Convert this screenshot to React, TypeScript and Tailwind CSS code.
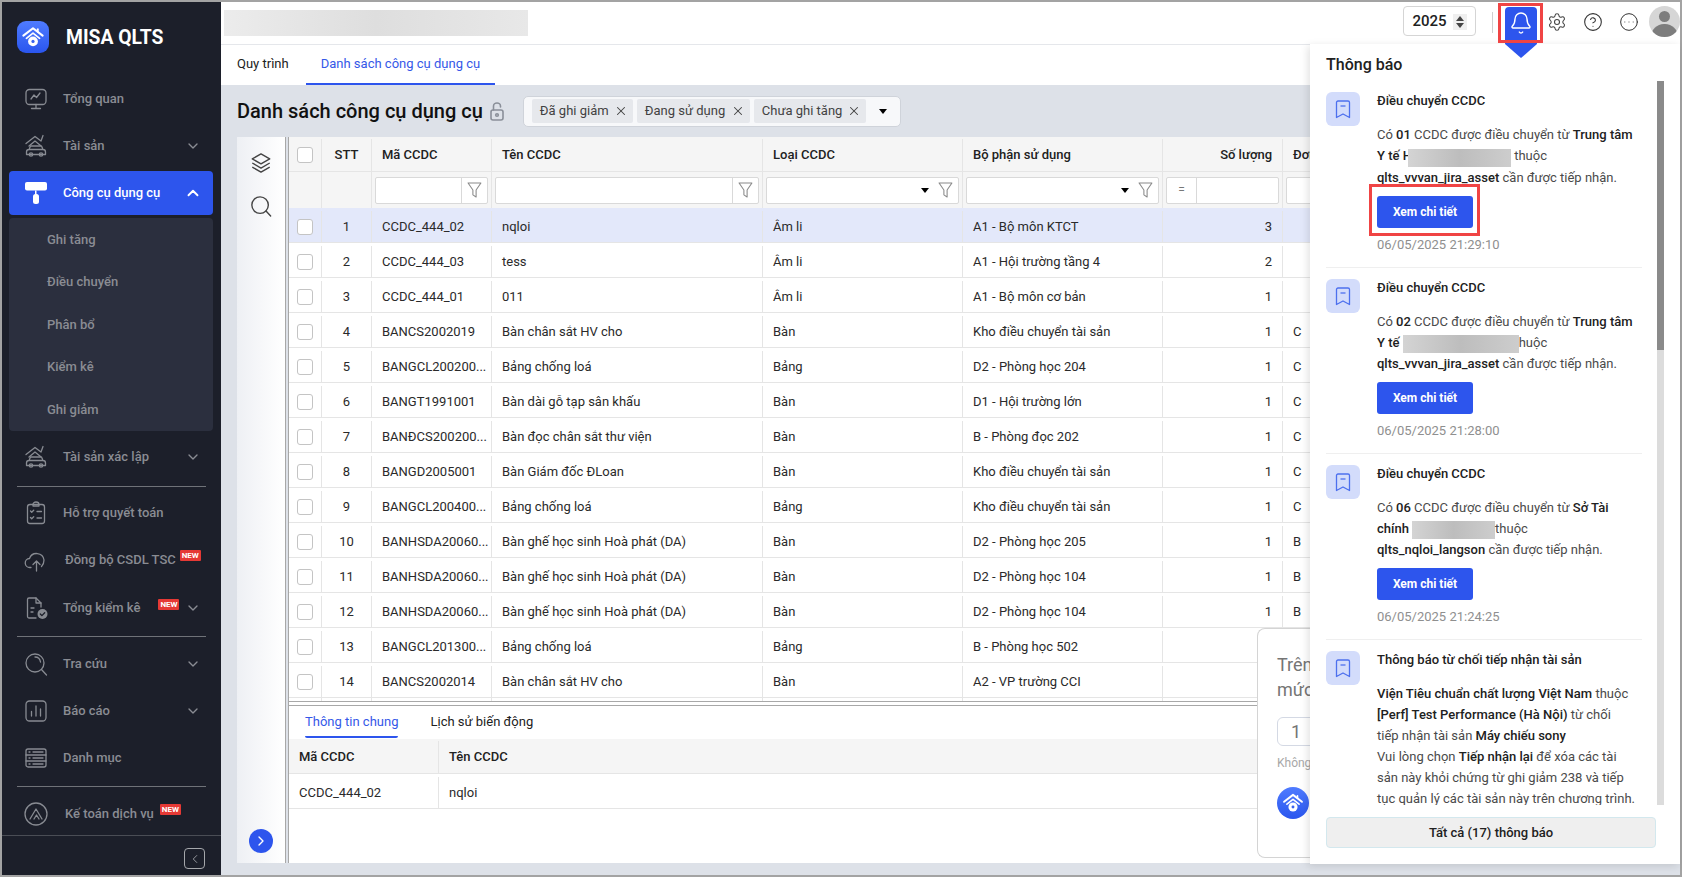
import { Bell, ChevronDown, ChevronLeft, ChevronRight, ChevronUp, CircleEllipsis, CircleHelp, Settings, X } from "lucide-react";
import type { ReactNode } from "react";

const BLUE = "bg-[#2d55ed]";

function LogoMark({ size }: { size: number }) {
  return (
    <svg width={size} height={size} viewBox="0 0 32 32" fill="none">
      <path d="M5 14.5 16 6l11 8.5" stroke="#fff" strokeWidth="2.4" strokeLinecap="round" strokeLinejoin="round" />
      <path d="M8.5 17.5 16 11.5l7.500 6" stroke="#fff" strokeWidth="2" strokeLinecap="round" strokeLinejoin="round" />
      <path d="M21.500 7V10" stroke="#fff" strokeWidth="2" strokeLinecap="round" />
      <circle cx="16" cy="21" r="5.600" fill="#fff" />
      <circle cx="16" cy="21" r="1.800" fill="#3a63ef" />
    </svg>
  );
}

function IconBase({ children }: { children: ReactNode }) {
  return (
    <svg width={24} height={24} viewBox="0 0 24 24" fill="none" stroke="#888b92" strokeWidth="1.300" strokeLinecap="round" strokeLinejoin="round">
      {children}
    </svg>
  );
}

const MonitorIcon = () => (
  <IconBase>
    <rect x="2" y="2.500" width="20" height="15" rx="3.500" />
    <path d="M7 12l3-4 2.500 2.500L16 6M12 17.500V21M7.500 21.500h9" />
  </IconBase>
);

const HouseCarIcon = () => (
  <IconBase>
    <path d="M2 9.500 11 2.500l6 4.500M17 7l2-5.500M5 12l6-5 5.500 4.500" />
    <path d="M5 15.500l1.500-3.500h11l1.500 3.500M2.500 18c0-1.500 1-2.500 2.500-2.500h14c1.500 0 2.500 1 2.500 2.500v2.500h-19z" />
    <circle cx="7" cy="20.500" r="1.700" />
    <circle cx="17" cy="20.500" r="1.700" />
  </IconBase>
);

const RollerIcon = () => (
  <svg width="24" height="24" viewBox="0 0 24 24" fill="#fff">
    <rect x="1" y="1" width="22" height="8.500" rx="2" />
    <path d="M11 9.500h1.500v4H11z" />
    <rect x="9" y="13" width="6" height="10" rx="2.500" />
  </svg>
);

const ClipboardIcon = () => (
  <IconBase>
    <rect x="3.500" y="3.500" width="17" height="19" rx="2.500" />
    <path d="M9 3.500c0-1.500 1.300-2.500 3-2.500s3 1 3 2.500V5H9zM6.500 10l1.200 1.200 2-2M13 10.500h4.500M6.500 16.500l1.200 1.200 2-2M13 17h4.500" />
  </IconBase>
);

const CloudUpIcon = () => (
  <IconBase>
    <path d="M7 19.500H6a4.500 4.500 0 0 1-.5-9 7.500 7.500 0 0 1 14.500 1.500c0 3-1 5-2.500 6.500" />
    <path d="M12.500 23v-10M9 16.500l3.500-3.500 3.500 3.500" />
  </IconBase>
);

const FileCheckIcon = () => (
  <IconBase>
    <path d="M17 11V7l-5-5H5a1.500 1.500 0 0 0-1.500 1.500v17A1.500 1.500 0 0 0 5 22h7" />
    <path d="M12 2v5h5M7 12h3M7 16h2" />
    <circle cx="18.500" cy="18" r="5" fill="#888b92" stroke="none" />
    <path d="M16.300 18l1.600 1.600 2.800-2.800" stroke="#1c1f2a" />
  </IconBase>
);

const SearchIcon = () => (
  <IconBase>
    <circle cx="11" cy="11" r="9" />
    <path d="M17.500 17.500l5 5.500M11 5c2.500 0 5 1.500 5.500 5" />
  </IconBase>
);

const ChartIcon = () => (
  <IconBase>
    <rect x="2" y="2" width="20" height="20" rx="3.500" />
    <path d="M7.500 12.500V17M12 7v10M16.500 10v7" />
  </IconBase>
);

const ListIcon = () => (
  <IconBase>
    <rect x="2" y="3" width="20" height="18" rx="2" />
    <path d="M2 9h20M2 15h20M5 6h1M9 6h10M5 12h1M9 12h10M5 18h1M9 18h10" />
  </IconBase>
);

const AccountIcon = () => (
  <IconBase>
    <circle cx="12" cy="12" r="11" />
    <path d="M6 17 12 7l6 10M10 17l2.500-4 2.500 4" />
  </IconBase>
);

function Funnel() {
  return (
    <svg width="15" height="18" viewBox="0 0 14 16" fill="none" stroke="#8a8a8a" strokeWidth="1" strokeLinejoin="round">
      <path d="M1 1.500h12L8.500 8v6.500l-3-2V8z" />
    </svg>
  );
}

function Caret() {
  return <span className="block h-0 w-0 border-x-[4px] border-t-[5px] border-x-transparent border-t-black" />;
}

function NewBadge({ className }: { className: string }) {
  return <span className={`flex h-[11px] w-[21px] shrink-0 items-center justify-center rounded-[1px] bg-[#e53935] text-[8px] font-bold leading-none text-white ${className}`}>NEW</span>;
}

function NavItem({ icon, label, chevron, textClass = "ml-[15px]", badge, shift = "" }: { icon: ReactNode; label: string; chevron?: boolean; textClass?: string; badge?: ReactNode; shift?: string }) {
  return (
    <div className={`flex h-[47px] shrink-0 items-center pl-[22px] pr-[22px] text-[13px] font-medium text-[#8a8c93] ${shift}`}>
      <span className="flex w-[24px] shrink-0 justify-center">{icon}</span>
      <span className={`whitespace-nowrap ${textClass}`}>{label}</span>
      {badge}
      {chevron && <ChevronDown size={16} strokeWidth={2} className="ml-auto -mr-[2px] shrink-0" />}
    </div>
  );
}

function Divider() {
  return <div className="mx-[15px] my-[1px] h-px shrink-0 bg-[#6f7278]" />;
}

function Sidebar() {
  return (
    <aside className="flex h-full w-[219px] shrink-0 flex-col bg-[#1c1f2a]">
      <div className="flex h-[73px] shrink-0 items-start pl-[15px] pt-[19px]">
        <span className="flex h-[32px] w-[32px] items-center justify-center rounded-[9px] bg-gradient-to-b from-[#4f7bff] to-[#2a55ee]">
          <LogoMark size={28} />
        </span>
        <span className="ml-[17px] mt-[4px] text-[19.3px] font-bold leading-[26px] text-white">MISA QLTS</span>
      </div>
      <NavItem icon={<MonitorIcon />} label="Tổng quan" />
      <NavItem icon={<HouseCarIcon />} label="Tài sản" chevron />
      <div className={`ml-[7px] mr-[8px] mt-[2px] flex h-[44px] shrink-0 items-center rounded-[4px] ${BLUE} pl-[15px] pr-[11px] text-[13px] font-medium text-white`}>
        <RollerIcon />
        <span className="ml-[15px]">Công cụ dụng cụ</span>
        <ChevronUp size={18} strokeWidth={2.500} className="ml-auto" />
      </div>
      <div className="ml-[7px] mr-[8px] mt-[3px] flex h-[213px] shrink-0 flex-col justify-center rounded-[4px] bg-[#2b2f3e] pl-[38px] text-[13px] font-medium text-[#8a8c93]">
        {["Ghi tăng", "Điều chuyển", "Phân bổ", "Kiểm kê", "Ghi giảm"].map((s) => (
          <div key={s} className="flex h-[43px] items-center">{s}</div>
        ))}
      </div>
      <div className="mt-[2px]"><NavItem icon={<HouseCarIcon />} label="Tài sản xác lập" chevron /></div>
      <div className="mt-[5px]"><Divider /></div>
      <NavItem icon={<ClipboardIcon />} label="Hỗ trợ quyết toán" shift="pt-[2px]" />
      <NavItem icon={<CloudUpIcon />} label="Đồng bộ CSDL TSC" textClass="ml-[17px]" shift="pt-[2px]" badge={<NewBadge className="ml-[4px] -mt-[8px]" />} />
      <NavItem icon={<FileCheckIcon />} label="Tổng kiểm kê" chevron shift="pt-[4px]" badge={<NewBadge className="ml-[18px] -mt-[6px]" />} />
      <div className="mt-[6px]"><Divider /></div>
      <NavItem icon={<SearchIcon />} label="Tra cứu" chevron shift="pt-[4px]" />
      <NavItem icon={<ChartIcon />} label="Báo cáo" chevron shift="pt-[4px]" />
      <NavItem icon={<ListIcon />} label="Danh mục" shift="pt-[4px]" />
      <div className="mt-[6px]"><Divider /></div>
      <NavItem icon={<AccountIcon />} label="Kế toán dịch vụ" textClass="ml-[17px]" shift="pt-[4px]" badge={<NewBadge className="ml-[6px] -mt-[8px]" />} />
      <div className="flex flex-1 items-start justify-end border-t border-[#4a4d55] pr-[16px] pt-[12px]">
        <span className="flex h-[21px] w-[21px] items-center justify-center rounded-[4px] border border-[#a5a7ab] text-[#a5a7ab]">
          <ChevronLeft size={14} strokeWidth={1.500} />
        </span>
      </div>
    </aside>
  );
}

function Header() {
  return (
    <header className="flex h-[43px] shrink-0 border-b border-[#e5e7eb] bg-white">
      <div className="ml-[3px] mt-[8px] h-[26px] w-[304px] bg-gradient-to-r from-[#ececec] via-[#dedede] to-[#e8e8e8]" />
      <div className="ml-auto mt-[4px] flex h-[30px] w-[73px] items-center justify-center gap-[6px] rounded-[4px] border border-[#d5d5d5] pt-[1px] text-[15px] font-medium text-[#212121]">
        2025
        <span className="flex h-[16px] w-[14px] flex-col items-center justify-center gap-[2px] bg-[#efefef]">
          <span className="h-0 w-0 border-x-[4px] border-b-[5px] border-x-transparent border-b-[#444]" />
          <span className="h-0 w-0 border-x-[4px] border-t-[5px] border-x-transparent border-t-[#444]" />
        </span>
      </div>
      <div className="ml-[16px] mt-[10px] h-[21px] w-px bg-[#cfcfcf]" />
      <div className={`relative z-40 ml-[12px] mt-[5px] flex h-[37px] w-[32px] items-start justify-center rounded-t-[4px] ${BLUE} pt-[4px]`}>
        <Bell size={24} strokeWidth={1.400} className="text-white" />
        <span className="absolute left-0 top-full h-0 w-0 border-x-[16px] border-t-[14px] border-x-transparent border-t-[#2d55ed]" />
      </div>
      <Settings size={20} strokeWidth={1.300} className="ml-[10px] mt-[10px] text-[#444]" />
      <CircleHelp size={20} strokeWidth={1.300} className="ml-[16px] mt-[10px] text-[#333]" />
      <CircleEllipsis size={20} strokeWidth={1.200} className="ml-[16px] mt-[10px] text-[#333]" />
      <span className="ml-[10px] mt-[4px] flex h-[31px] w-[31px] flex-col items-center overflow-hidden rounded-full bg-[#d6d6d6] pt-[5px]">
        <span className="h-[11px] w-[11px] rounded-full bg-[#7d7d7d]" />
        <span className="mt-[2px] h-[14px] w-[27px] rounded-t-full bg-[#7d7d7d]" />
      </span>
    </header>
  );
}

function Tag({ label, width }: { label: string; width: string }) {
  return (
    <span className={`flex h-[24px] items-center justify-between rounded-[2px] bg-[#e6e8ec] pl-[8px] pr-[5px] text-[13px] text-[#424242] ${width}`}>
      {label}
      <X size={14} strokeWidth={1.800} />
    </span>
  );
}

const columns = ["w-[33px]", "w-[50px]", "w-[120px]", "w-[271px]", "w-[200px]", "w-[200px]", "w-[120px]", "w-[60px]"];

const rows = [
  ["1", "CCDC_444_02", "nqloi", "Âm li", "A1 - Bộ môn KTCT", "3", ""],
  ["2", "CCDC_444_03", "tess", "Âm li", "A1 - Hội trường tầng 4", "2", ""],
  ["3", "CCDC_444_01", "011", "Âm li", "A1 - Bộ môn cơ bản", "1", ""],
  ["4", "BANCS2002019", "Bàn chân sắt HV cho", "Bàn", "Kho điều chuyển tài sản", "1", "C"],
  ["5", "BANGCL200200...", "Bảng chống loá", "Bảng", "D2 - Phòng học 204", "1", "C"],
  ["6", "BANGT1991001", "Bàn dài gỗ tạp sân khấu", "Bàn", "D1 - Hội trường lớn", "1", "C"],
  ["7", "BANĐCS200200...", "Bàn đọc chân sắt thư viện", "Bàn", "B - Phòng đọc 202", "1", "C"],
  ["8", "BANGD2005001", "Bàn Giám đốc ĐLoan", "Bàn", "Kho điều chuyển tài sản", "1", "C"],
  ["9", "BANGCL200400...", "Bảng chống loá", "Bảng", "Kho điều chuyển tài sản", "1", "C"],
  ["10", "BANHSDA20060...", "Bàn ghế học sinh Hoà phát (DA)", "Bàn", "D2 - Phòng học 205", "1", "B"],
  ["11", "BANHSDA20060...", "Bàn ghế học sinh Hoà phát (DA)", "Bàn", "D2 - Phòng học 104", "1", "B"],
  ["12", "BANHSDA20060...", "Bàn ghế học sinh Hoà phát (DA)", "Bàn", "D2 - Phòng học 104", "1", "B"],
  ["13", "BANGCL201300...", "Bảng chống loá", "Bảng", "B - Phòng học 502", "1", ""],
  ["14", "BANCS2002014", "Bàn chân sắt HV cho", "Bàn", "A2 - VP trường CCI", "1", ""],
];

function Checkbox() {
  return <span className="block h-[16px] w-[16px] rounded-[3px] border border-[#c4c4c4] bg-white" />;
}

function FilterInput({ col, kind }: { col: string; kind: "text" | "select" | "number" | "plain" }) {
  return (
    <div className={`flex h-full shrink-0 items-center border-r border-[#e5e5e5] px-[3px] ${col}`}>
      <div className="flex h-[27px] w-full items-center rounded-[2px] border border-[#d9d9d9] bg-white">
        {kind === "text" && (
          <span className="ml-auto flex h-full w-[26px] items-center justify-center border-l border-[#d9d9d9]"><Funnel /></span>
        )}
        {kind === "select" && (
          <span className="ml-auto flex items-center gap-[9px] pr-[5px]"><Caret /><Funnel /></span>
        )}
        {kind === "number" && (
          <span className="flex h-full w-[30px] items-center justify-center border-r border-[#d9d9d9] text-[12px] text-[#777]">=</span>
        )}
      </div>
    </div>
  );
}

function DataGrid() {
  return (
    <div className="h-[565px] shrink-0 overflow-hidden border-b border-[#a8a8a8] bg-white text-[13px] text-[#2a2a2a]">
      <div className="flex h-[35px] w-[1100px] border-b border-[#e5e5e5] bg-[#f5f5f5] pt-[2px] font-medium text-[#212121]">
        <div className={`flex items-center justify-center border-r border-[#e5e5e5] ${columns[0]}`}><Checkbox /></div>
        <div className={`flex items-center justify-center border-r border-[#e5e5e5] ${columns[1]}`}>STT</div>
        {["Mã CCDC", "Tên CCDC", "Loại CCDC", "Bộ phận sử dụng"].map((h, i) => (
          <div key={h} className={`flex items-center border-r border-[#e5e5e5] pl-[10px] ${columns[i + 2]}`}>{h}</div>
        ))}
        <div className={`flex items-center justify-end border-r border-[#e5e5e5] pr-[10px] ${columns[6]}`}>Số lượng</div>
        <div className={`flex items-center pl-[10px] ${columns[7]}`}>Đơn vị</div>
      </div>
      <div className="flex h-[36px] w-[1100px] bg-[#f5f5f5]">
        <div className={`border-r border-[#e5e5e5] ${columns[0]}`} />
        <div className={`border-r border-[#e5e5e5] ${columns[1]}`} />
        <FilterInput col={columns[2]} kind="text" />
        <FilterInput col={columns[3]} kind="text" />
        <FilterInput col={columns[4]} kind="select" />
        <FilterInput col={columns[5]} kind="select" />
        <FilterInput col={columns[6]} kind="number" />
        <FilterInput col={columns[7]} kind="plain" />
      </div>
      {rows.map((r, i) => (
        <div key={r[0]} className={`flex h-[35px] w-[1100px] border-b border-[#e5e5e5] pt-[3px] ${i === 0 ? "bg-[#e3e8fa]" : ""}`}>
          <div className={`flex items-center justify-center border-r border-[#e5e5e5] ${columns[0]}`}><Checkbox /></div>
          <div className={`flex items-center justify-center border-r border-[#e5e5e5] ${columns[1]}`}>{r[0]}</div>
          <div className={`flex items-center border-r border-[#e5e5e5] pl-[10px] ${columns[2]}`}>{r[1]}</div>
          <div className={`flex items-center border-r border-[#e5e5e5] pl-[10px] ${columns[3]}`}>{r[2]}</div>
          <div className={`flex items-center border-r border-[#e5e5e5] pl-[10px] ${columns[4]}`}>{r[3]}</div>
          <div className={`flex items-center border-r border-[#e5e5e5] pl-[10px] ${columns[5]}`}>{r[4]}</div>
          <div className={`flex items-center justify-end border-r border-[#e5e5e5] pr-[10px] ${columns[6]}`}>{r[5]}</div>
          <div className={`flex items-center pl-[10px] ${columns[7]}`}>{r[6]}</div>
        </div>
      ))}
      <div className="flex h-[35px] w-[1100px]">
        {columns.map((c, i) => (
          <div key={i} className={`border-r border-[#e5e5e5] ${c}`} />
        ))}
      </div>
    </div>
  );
}

function DetailPane() {
  return (
    <div className="mt-[3px] flex-1 border-t border-[#a8a8a8] text-[13px] text-[#2a2a2a]">
      <div className="flex h-[33px] gap-[32px] pl-[16px]">
        <span className="h-[32px] rounded-b-[2px] border-b-2 border-[#2d55ed] pt-[6px] text-[#3558e8]">Thông tin chung</span>
        <span className="pt-[6px] text-[#212121]">Lịch sử biến động</span>
      </div>
      <div className="flex h-[35px] border-b border-[#e5e5e5] bg-[#f5f5f5] pt-[2px] font-medium text-[#212121]">
        <div className="flex w-[150px] items-center border-r border-[#e5e5e5] pl-[10px]">Mã CCDC</div>
        <div className="flex flex-1 items-center pl-[10px]">Tên CCDC</div>
      </div>
      <div className="flex h-[35px] border-b border-[#e5e5e5] pt-[3px]">
        <div className="flex w-[150px] items-center border-r border-[#e5e5e5] pl-[10px]">CCDC_444_02</div>
        <div className="flex flex-1 items-center pl-[10px]">nqloi</div>
      </div>
    </div>
  );
}

function Blur({ width }: { width: string }) {
  return <span className={`inline-block h-[18px] bg-gradient-to-r from-[#d4d4d4] via-[#bdbdbd] to-[#cdcdcd] align-middle ${width}`} />;
}

function NotiItem({ title, body, date, last }: { title: string; body: ReactNode; date?: string; last?: boolean }) {
  return (
    <div className={last ? "" : "mb-[11px] border-b border-[#efefef] pb-[14px]"}>
      <div className="flex">
        <span className="flex h-[34px] w-[34px] shrink-0 items-center justify-center rounded-[6px] bg-[#d3dcfb]">
          <svg width="16" height="19" viewBox="0 0 16 19" fill="none" stroke="#4d70ee" strokeWidth="1.300" strokeLinejoin="round">
            <path d="M1.500 2.500A1.500 1.500 0 0 1 3 1h10a1.500 1.500 0 0 1 1.500 1.500V17.500L8 14l-6.500 3.500z" />
            <path d="M5.500 6h5" />
          </svg>
        </span>
        <div className="ml-[17px] w-[262px]">
          <div className="h-[17px] whitespace-nowrap text-[13px] font-medium leading-[17px] text-[#212121]">{title}</div>
          <div className="mt-[15px] whitespace-nowrap text-[13px] leading-[21px] text-[#4a4a4a]">{body}</div>
          {date && (
            <>
              <button className={`mt-[8px] block h-[32px] w-[96px] rounded-[3px] ${BLUE} text-[12px] font-bold text-white`}>Xem chi tiết</button>
              <div className="mt-[9px] h-[16px] text-[13px] leading-[16px] text-[#8f8f8f]">{date}</div>
            </>
          )}
        </div>
      </div>
    </div>
  );
}

const B = ({ children }: { children: ReactNode }) => <b className="font-medium text-[#212121]">{children}</b>;

function NotificationPanel() {
  return (
    <div className="absolute right-[2px] top-[44px] z-30 flex h-[820px] w-[370px] flex-col bg-white shadow-[-2px_2px_8px_rgba(0,0,0,0.12)]">
      <div className="h-[37px] shrink-0 pl-[16px] pt-[11px] text-[16px] font-medium leading-[20px] text-[#212121]">Thông báo</div>
      <div className="flex h-[724px] shrink-0 overflow-hidden pl-[16px]">
        <div className="w-[316px] shrink-0 pt-[11px]">
          <NotiItem
            title="Điều chuyển CCDC"
            date="06/05/2025 21:29:10"
            body={<>Có <B>01</B> CCDC được điều chuyển từ <B>Trung tâm</B><br /><B>Y tế H</B><span className="-ml-[4px] inline-block align-middle"><Blur width="w-[103px]" /></span> thuộc<br /><B>qlts_vvvan_jira_asset</B> cần được tiếp nhận.</>}
          />
          <NotiItem
            title="Điều chuyển CCDC"
            date="06/05/2025 21:28:00"
            body={<>Có <B>02</B> CCDC được điều chuyển từ <B>Trung tâm</B><br /><B>Y tế</B> <Blur width="w-[116px]" />huộc<br /><B>qlts_vvvan_jira_asset</B> cần được tiếp nhận.</>}
          />
          <NotiItem
            title="Điều chuyển CCDC"
            date="06/05/2025 21:24:25"
            body={<>Có <B>06</B> CCDC được điều chuyển từ <B>Sở Tài</B><br /><B>chính</B> <Blur width="w-[83px]" />thuộc<br /><B>qlts_nqloi_langson</B> cần được tiếp nhận.</>}
          />
          <NotiItem
            last
            title="Thông báo từ chối tiếp nhận tài sản"
            body={<><B>Viện Tiêu chuẩn chất lượng Việt Nam</B> thuộc<br /><B>[Perf] Test Performance (Hà Nội)</B> từ chối<br />tiếp nhận tài sản <B>Máy chiếu sony</B><br />Vui lòng chọn <B>Tiếp nhận lại</B> để xóa các tài<br />sản này khỏi chứng từ ghi giảm 238 và tiếp<br />tục quản lý các tài sản này trên chương trình.</>}
          />
        </div>
        <div className="ml-[15px] w-[7px] shrink-0 bg-[#dcdcdc]">
          <div className="h-[269px] bg-[#8a8a8a]" />
        </div>
      </div>
      <div className="ml-[16px] mt-[12px] flex h-[31px] w-[330px] items-center justify-center rounded-[4px] border border-[#d3e8ee] bg-[#efefef] text-[13px] font-medium text-[#212121]">
        Tất cả (17) thông báo
      </div>
    </div>
  );
}

function BehindPopup() {
  return (
    <div className="absolute left-[1257px] top-[628px] z-20 h-[230px] w-[53px] overflow-hidden rounded-l-[8px] border border-r-0 border-[#d4d4d4] bg-white pl-[19px] pt-[23px] text-[#757575]">
      <div className="text-[18px] leading-[25px]">Trên<br />mức</div>
      <div className="mt-[15px] flex h-[29px] w-[60px] items-center rounded-[6px] border border-[#d4d9e4] pl-[13px] text-[18px]">1</div>
      <div className="mt-[8px] text-[12px] text-[#a8a8a8]">Không</div>
      <div className="mt-[15px] flex h-[32px] w-[32px] items-center justify-center rounded-full bg-gradient-to-b from-[#4f7bff] to-[#2a55ee]">
        <LogoMark size={26} />
      </div>
    </div>
  );
}

export default function App() {
  return (
    <div className="relative h-screen w-screen overflow-hidden bg-[#a3a3a3] p-[2px] font-[Roboto,sans-serif]">
      <div className="flex h-full">
        <Sidebar />
        <main className="flex min-w-0 flex-1 flex-col bg-[#dde1e8]">
          <Header />
          <nav className="flex h-[40px] shrink-0 bg-white pl-[16px] text-[13px] text-[#212121]">
            <span className="flex items-center pb-[2px]">Quy trình</span>
            <span className="ml-[17px] flex items-center border-b-2 border-[#2d55ed] px-[15px] text-[#3558e8]">Danh sách công cụ dụng cụ</span>
          </nav>
          <div className="flex h-[52px] shrink-0 items-center pl-[16px]">
            <h1 className="text-[20px] font-medium leading-none text-[#111]">Danh sách công cụ dụng cụ</h1>
            <svg width="14" height="19" viewBox="0 0 14 19" fill="none" stroke="#8a8f99" strokeWidth="1.600" className="ml-[7px]">
              <rect x="1" y="8" width="12" height="10" rx="2" />
              <path d="M3.500 8V4.200a3.500 3.200 0 0 1 7 0V5" strokeLinecap="round" />
              <circle cx="7" cy="13" r="1.300" />
            </svg>
            <div className="ml-[19px] flex h-[31px] w-[378px] items-center gap-[4px] rounded-[5px] border border-[#cfd3da] bg-[#f7f8fa] px-[8px]">
              <Tag label="Đã ghi giảm" width="w-[101px]" />
              <Tag label="Đang sử dụng" width="w-[113px]" />
              <Tag label="Chưa ghi tăng" width="w-[112px]" />
              <span className="ml-[9px] flex items-center"><Caret /></span>
            </div>
            <div className={`ml-[409px] h-[32px] w-[100px] shrink-0 rounded-[4px] ${BLUE}`} />
          </div>
          <section className="mb-[12px] ml-[16px] flex min-h-0 flex-1">
            <div className="flex w-[49px] shrink-0 flex-col items-center border-r border-[#a8a8a8] bg-gradient-to-r from-[#eef0f4] to-white pt-[15px]">
              <svg width="22" height="22" viewBox="0 0 24 24" fill="none" stroke="#444" strokeWidth="1.500" strokeLinejoin="round">
                <path d="M12 2 2.500 7.500 12 13l9.500-5.500zM2.500 12 12 17.500l9.500-5.500M2.500 16.500 12 22l9.500-5.500" />
              </svg>
              <svg width="22" height="22" viewBox="0 0 24 24" fill="none" stroke="#444" strokeWidth="1.500" strokeLinecap="round" className="mt-[21px]">
                <circle cx="11" cy="11" r="9" />
                <path d="M17.500 17.500l5 5.500" />
              </svg>
              <span className={`mb-[10px] mt-auto flex h-[24px] w-[24px] items-center justify-center rounded-full ${BLUE} text-white`}>
                <ChevronRight size={16} strokeWidth={2} />
              </span>
            </div>
            <div className="ml-[2px] flex min-w-0 flex-1 flex-col border-l border-[#a8a8a8] bg-white">
              <DataGrid />
              <DetailPane />
            </div>
          </section>
        </main>
      </div>
      <BehindPopup />
      <NotificationPanel />
      <div className="absolute left-[1498px] top-[3px] z-50 h-[40px] w-[45px] border-[3px] border-[#f04444]" />
      <div className="absolute left-[1369px] top-[184px] z-50 h-[52px] w-[111px] border-[3px] border-[#f04444]" />
    </div>
  );
}
